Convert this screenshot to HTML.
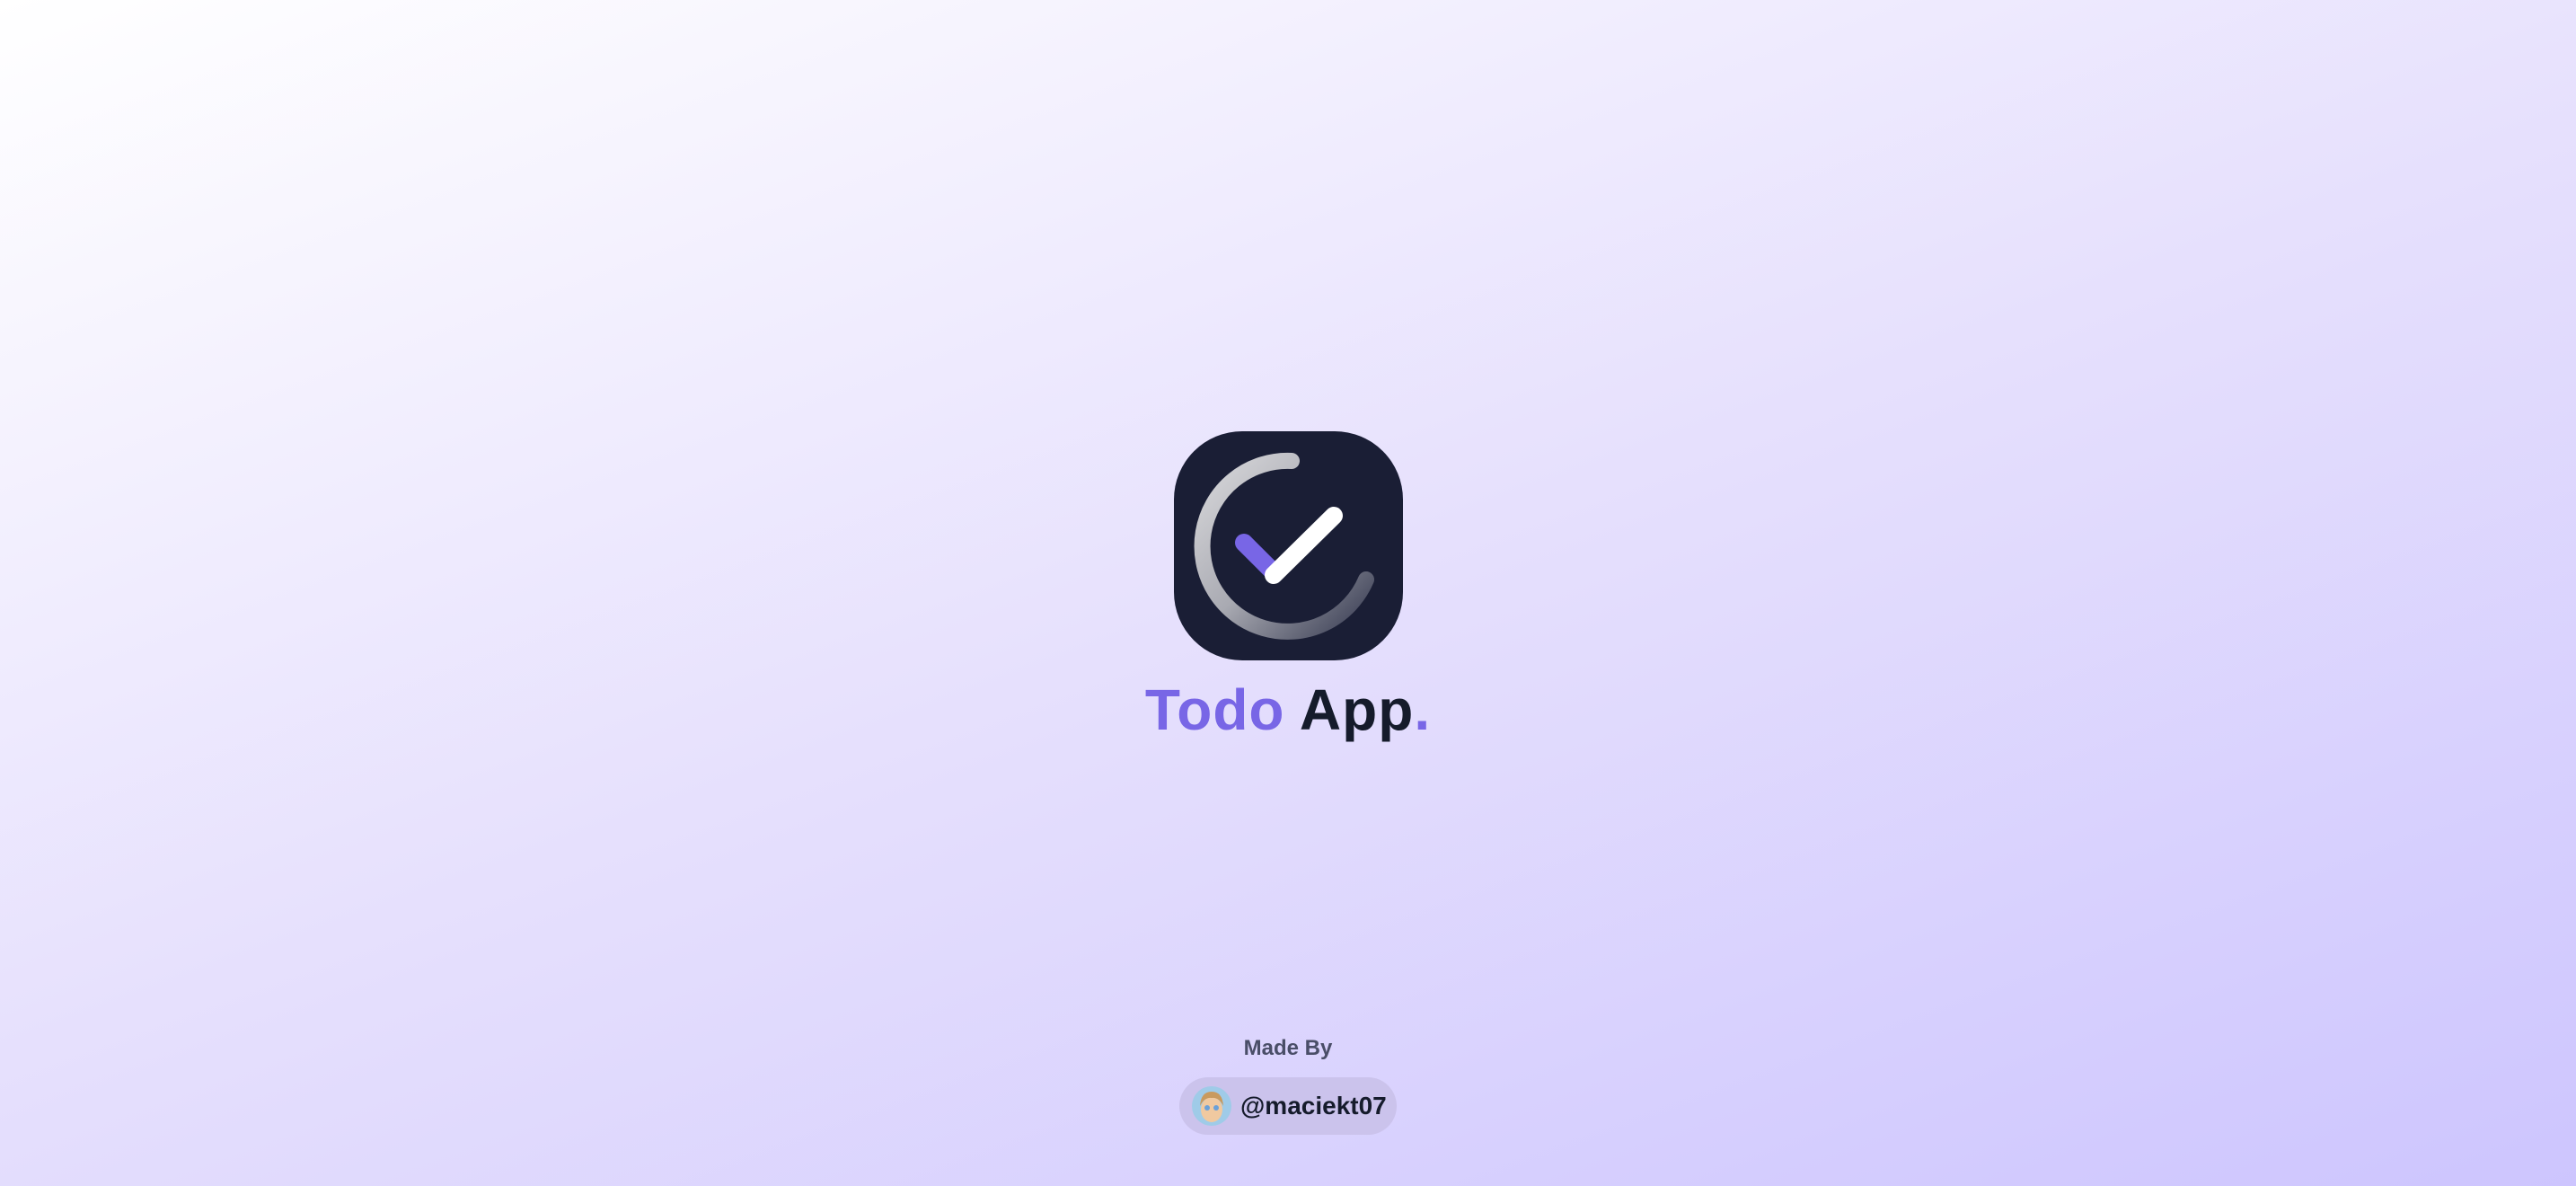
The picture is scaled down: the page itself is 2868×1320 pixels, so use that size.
<!DOCTYPE html>
<html><head><meta charset="utf-8"><style>
html,body{margin:0;padding:0}
body{width:2868px;height:1320px;overflow:hidden;position:relative;background:linear-gradient(160deg,#ffffff 0%,#e6e0fd 50%,#cdc5fe 100%);font-family:"Liberation Sans",sans-serif}
.title{position:absolute;left:0;width:2868px;top:752px;text-align:center;font-weight:bold;font-size:64px;letter-spacing:1px;line-height:76px}
.made{position:absolute;left:0;width:2868px;top:1152px;text-align:center;font-size:24px;color:#4a4e68;font-weight:bold;line-height:30px}
.pill{position:absolute;left:1313px;top:1199px;width:242px;height:64px;border-radius:32px;background:#cbc3ec}
.av{position:absolute;left:14px;top:10px;width:44px;height:44px;border-radius:50%;background:#9fcbe8;overflow:hidden}
.user{position:absolute;left:68px;top:0;line-height:64px;font-size:28px;font-weight:bold;color:#151b2b}
</style></head><body>
<svg width="2868" height="1320" style="position:absolute;left:0;top:0">
<defs><linearGradient id="g" x1="1340" y1="520" x2="1520" y2="700" gradientUnits="userSpaceOnUse"><stop offset="0" stop-color="#d6d6d9"/><stop offset="0.5" stop-color="#a9aab2"/><stop offset="1" stop-color="#3b3f55"/></linearGradient></defs>
<rect x="1307" y="480" width="255" height="255" rx="76" fill="#1a1e35"/>
<path d="M1438 513 A95 95 0 1 0 1521 645" fill="none" stroke="url(#g)" stroke-width="18" stroke-linecap="round"/>
<path d="M1385 604 L1418 637" stroke="#7866e6" stroke-width="20" stroke-linecap="round"/>
<path d="M1418 640 L1485 574" stroke="#ffffff" stroke-width="20" stroke-linecap="round"/>
</svg>
<div class="title"><span style="color:#7866e6">Todo</span> <span style="color:#151b2b">App</span><span style="color:#7866e6">.</span></div>
<div class="made">Made By</div>
<div class="pill"><div class="av"><svg width="44" height="44"><ellipse cx="22" cy="26" rx="12" ry="14" fill="#f0c9a0"/><path d="M9 22 Q10 6 22 6 Q34 6 35 22 Q30 12 22 13 Q14 12 9 22Z" fill="#c99a5e"/><circle cx="17" cy="24" r="3" fill="#6aa0d8"/><circle cx="27" cy="24" r="3" fill="#6aa0d8"/></svg></div><div class="user">@maciekt07</div></div>
</body></html>
